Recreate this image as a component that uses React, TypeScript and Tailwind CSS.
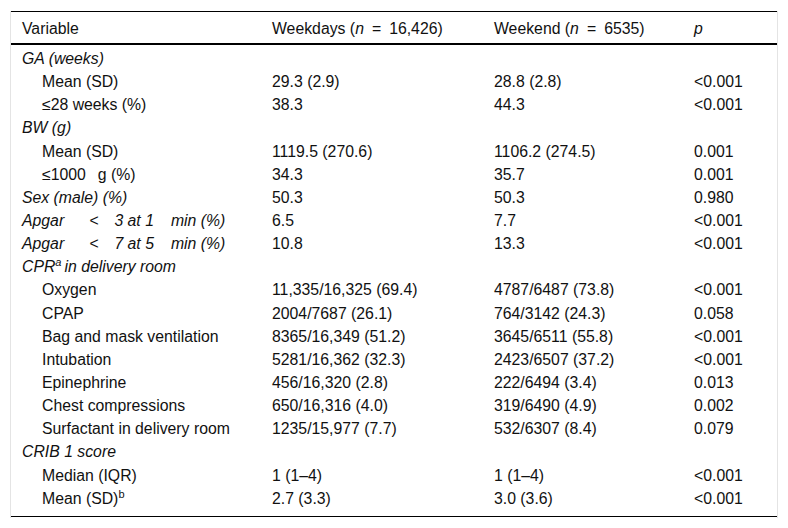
import type { ReactNode } from "react";

type Row = {
  label: ReactNode;
  indent?: boolean;
  italic?: boolean;
  wd?: string;
  we?: string;
  p?: string;
};

const Gap = ({ wide }: { wide?: boolean }) => (
  <span className={wide ? "inline-block w-[12px]" : "inline-block w-[8px]"} />
);

// the "<" in the Apgar labels sits in wide gaps in the original
const ApgarLabel = ({ a, b }: { a: string; b: string }) => (
  <>
    Apgar
    <span className="inline-block w-[25px]" />
    {"<"}
    <span className="inline-block w-[16px]" />
    {a} at {b}
    <span className="inline-block w-[17px]" />
    min (%)
  </>
);

const rows: Row[] = [
  { label: "GA (weeks)", italic: true },
  { label: "Mean (SD)", indent: true, wd: "29.3 (2.9)", we: "28.8 (2.8)", p: "<0.001" },
  { label: "≤28 weeks (%)", indent: true, wd: "38.3", we: "44.3", p: "<0.001" },
  { label: "BW (g)", italic: true },
  { label: "Mean (SD)", indent: true, wd: "1119.5 (270.6)", we: "1106.2 (274.5)", p: "0.001" },
  {
    label: (
      <>
        ≤1000
        <Gap wide />g (%)
      </>
    ),
    indent: true,
    wd: "34.3",
    we: "35.7",
    p: "0.001",
  },
  { label: "Sex (male) (%)", italic: true, wd: "50.3", we: "50.3", p: "0.980" },
  { label: <ApgarLabel a="3" b="1" />, italic: true, wd: "6.5", we: "7.7", p: "<0.001" },
  { label: <ApgarLabel a="7" b="5" />, italic: true, wd: "10.8", we: "13.3", p: "<0.001" },
  {
    label: (
      <>
        CPR
        <sup className="text-[11px] relative -top-[6px]">a</sup>
        <span className="ml-[3px]">in delivery room</span>
      </>
    ),
    italic: true,
  },
  { label: "Oxygen", indent: true, wd: "11,335/16,325 (69.4)", we: "4787/6487 (73.8)", p: "<0.001" },
  { label: "CPAP", indent: true, wd: "2004/7687 (26.1)", we: "764/3142 (24.3)", p: "0.058" },
  { label: "Bag and mask ventilation", indent: true, wd: "8365/16,349 (51.2)", we: "3645/6511 (55.8)", p: "<0.001" },
  { label: "Intubation", indent: true, wd: "5281/16,362 (32.3)", we: "2423/6507 (37.2)", p: "<0.001" },
  { label: "Epinephrine", indent: true, wd: "456/16,320 (2.8)", we: "222/6494 (3.4)", p: "0.013" },
  { label: "Chest compressions", indent: true, wd: "650/16,316 (4.0)", we: "319/6490 (4.9)", p: "0.002" },
  { label: "Surfactant in delivery room", indent: true, wd: "1235/15,977 (7.7)", we: "532/6307 (8.4)", p: "0.079" },
  { label: "CRIB 1 score", italic: true },
  { label: "Median (IQR)", indent: true, wd: "1 (1–4)", we: "1 (1–4)", p: "<0.001" },
  {
    label: (
      <>
        Mean (SD)
        <sup className="text-[11px] relative -top-[6px]">b</sup>
      </>
    ),
    indent: true,
    wd: "2.7 (3.3)",
    we: "3.0 (3.6)",
    p: "<0.001",
  },
];

const App = () => {
  return (
    <div className="w-[788px] h-[528px] bg-white px-[10px] pt-[11px] font-['Liberation_Sans',Arial,sans-serif] text-[15.8px] text-[#111]">
      <div className="border-x border-[#e4e4e4] pb-px">
        <div className="border-t border-black">
          {/* header */}
          <div className="grid grid-cols-[250px_222px_200px_1fr] h-[33px] pt-[2px] items-center border-b-2 border-black">
            <div className="pl-[11px]">Variable</div>
            <div className="pl-[11px] whitespace-nowrap">
              Weekdays (<i>n</i>
              <Gap />=<Gap />
              16,426)
            </div>
            <div className="pl-[11px] whitespace-nowrap">
              Weekend (<i>n</i>
              <Gap />=<Gap />
              6535)
            </div>
            <div className="pl-[11px]">
              <i>p</i>
            </div>
          </div>

          {/* body */}
          <div className="pt-[2px] pb-[6px] border-b border-black">
            {rows.map((r, i) => (
              <div
                key={i}
                className="grid grid-cols-[250px_222px_200px_1fr] leading-[23.15px] h-[23.15px]"
              >
                <div
                  className={`whitespace-nowrap ${r.indent ? "pl-[31px]" : "pl-[11px]"} ${
                    r.italic ? "italic" : ""
                  }`}
                >
                  {r.label}
                </div>
                <div className="pl-[11px] whitespace-nowrap">{r.wd}</div>
                <div className="pl-[11px] whitespace-nowrap">{r.we}</div>
                <div className="pl-[11px] whitespace-nowrap">{r.p}</div>
              </div>
            ))}
          </div>
        </div>
      </div>
    </div>
  );
};

export default App;
